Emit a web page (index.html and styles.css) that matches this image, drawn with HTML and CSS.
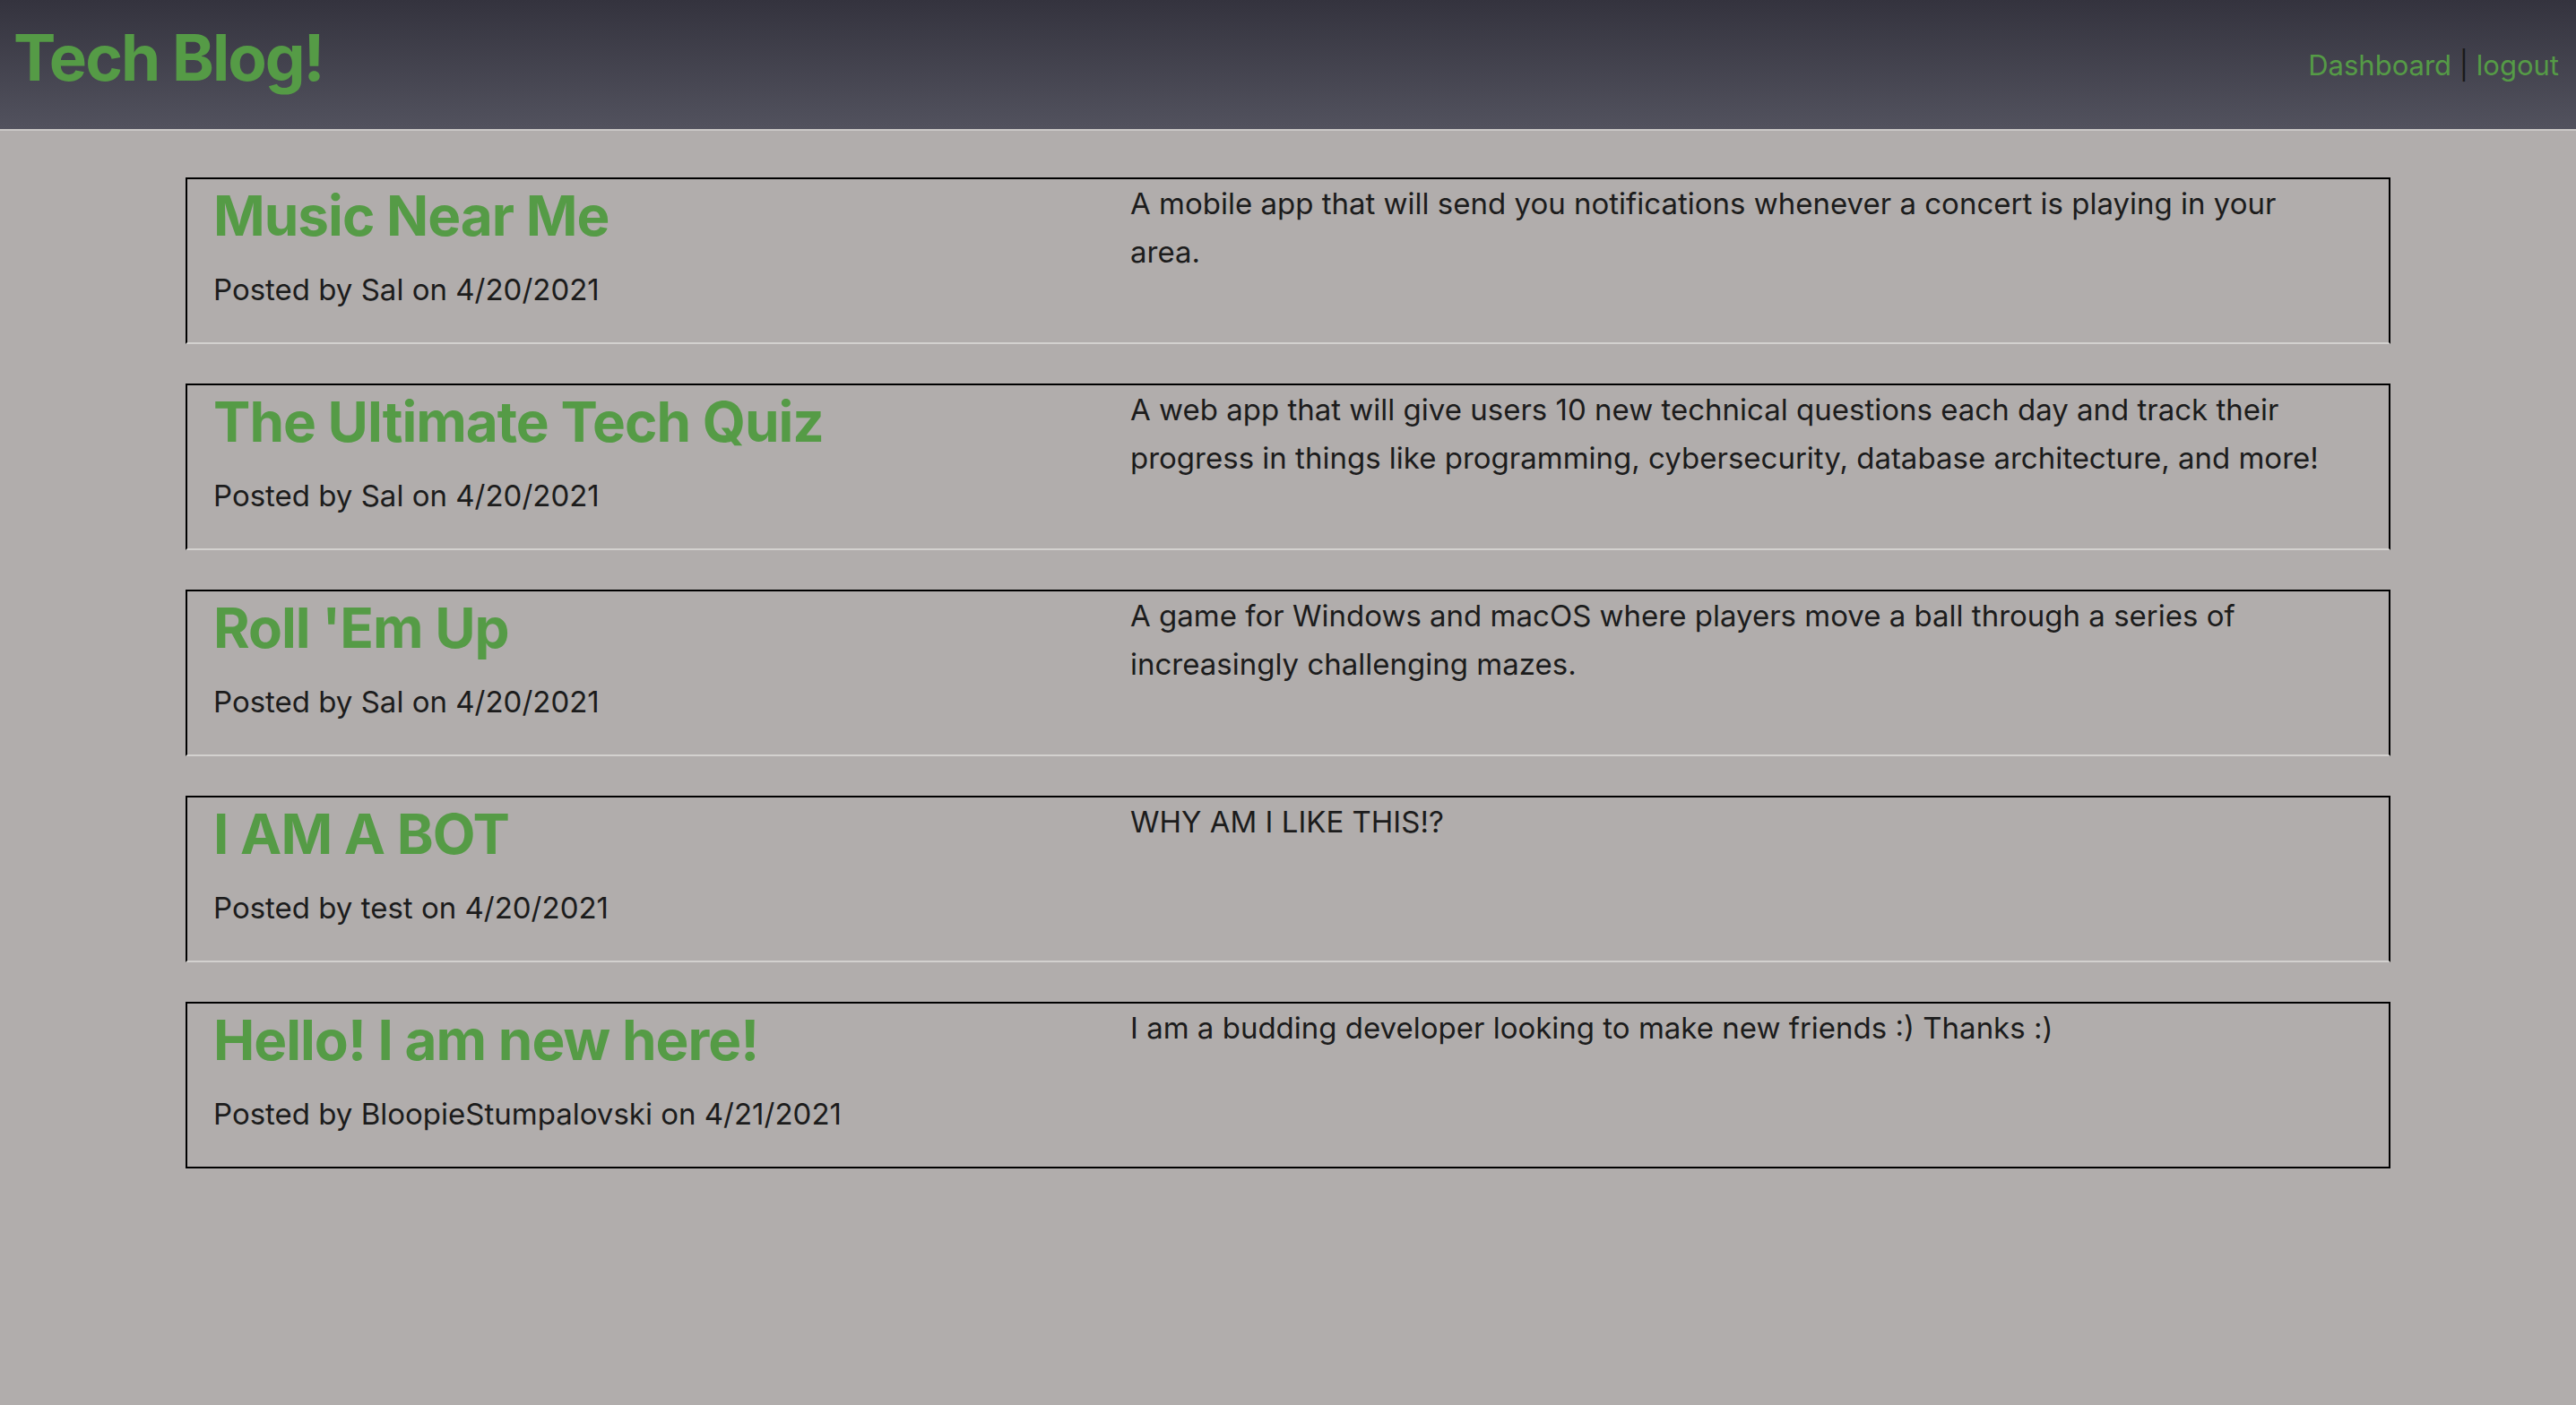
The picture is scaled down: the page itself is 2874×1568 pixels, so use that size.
FILE: index.html
```html
<!DOCTYPE html>
<html lang="en">
<head>
<meta charset="utf-8">
<title>Tech Blog!</title>
<link rel="stylesheet" href="styles.css">
</head>
<body>
<header class="site-header">
  <h1 class="brand">Tech Blog!</h1>
  <nav class="nav"><a class="nav-link" href="#">Dashboard</a> <span class="nav-sep">|</span> <a class="nav-link" href="#">logout</a></nav>
</header>
<main class="posts">
  <article class="post">
    <div class="post-head">
      <h2 class="post-title">Music Near Me</h2>
      <p class="post-meta">Posted by Sal on 4/20/2021</p>
    </div>
    <p class="post-body">A mobile app that will send you notifications whenever a concert is playing in your area.</p>
  </article>
  <article class="post">
    <div class="post-head">
      <h2 class="post-title">The Ultimate Tech Quiz</h2>
      <p class="post-meta">Posted by Sal on 4/20/2021</p>
    </div>
    <p class="post-body">A web app that will give users 10 new technical questions each day and track their progress in things like programming, cybersecurity, database architecture, and more!</p>
  </article>
  <article class="post">
    <div class="post-head">
      <h2 class="post-title">Roll 'Em Up</h2>
      <p class="post-meta">Posted by Sal on 4/20/2021</p>
    </div>
    <p class="post-body">A game for Windows and macOS where players move a ball through a series of increasingly challenging mazes.</p>
  </article>
  <article class="post">
    <div class="post-head">
      <h2 class="post-title">I AM A BOT</h2>
      <p class="post-meta">Posted by test on 4/20/2021</p>
    </div>
    <p class="post-body">WHY AM I LIKE THIS!?</p>
  </article>
  <article class="post post-last">
    <div class="post-head">
      <h2 class="post-title">Hello! I am new here!</h2>
      <p class="post-meta">Posted by BloopieStumpalovski on 4/21/2021</p>
    </div>
    <p class="post-body">I am a budding developer looking to make new friends :) Thanks :)</p>
  </article>
</main>
</body>
</html>
```

FILE: styles.css
```css
* {
  box-sizing: border-box;
}

html, body {
  margin: 0;
  padding: 0;
}

body {
  background: #b1adac;
  font-family: Inter, "Liberation Sans", sans-serif;
  color: #1c1c1c;
  min-height: 1568px;
}

.site-header {
  height: 146px;
  background: linear-gradient(to bottom, #34333e 0%, #52525e 100%);
  border-bottom: 2px solid #cac8c6;
  display: flex;
  justify-content: space-between;
  align-items: flex-start;
  padding: 0 19px 0 15px;
}

.brand {
  margin: 28px 0 0;
  font-size: 71px;
  line-height: 72px;
  font-weight: 700;
  letter-spacing: -2px;
  color: #559b46;
}

.nav {
  margin-top: 57px;
  font-size: 31px;
  line-height: 32px;
  white-space: nowrap;
}

.nav-link {
  color: #559b46;
  text-decoration: none;
}

.nav-sep {
  color: #1a1a1a;
}

.posts {
  width: 2460px;
  margin: 52px auto 0;
  display: flex;
  flex-direction: column;
  gap: 44px;
}

.post {
  height: 186px;
  border: 2px solid #000;
  border-bottom-color: #d3d1cf;
  padding: 0 29px;
  display: grid;
  grid-template-columns: 1023px 1fr;
}

.post-last {
  border-bottom-color: #000;
}

.post-title {
  margin: 7px 0 0;
  font-size: 62px;
  line-height: 68px;
  font-weight: 700;
  letter-spacing: -1px;
  color: #559b46;
}

.post-meta {
  margin: 28px 0 0;
  font-size: 33px;
  line-height: 40px;
}

.post-body {
  margin: 0;
  padding-right: 18px;
  font-size: 33px;
  line-height: 54px;
}
```
